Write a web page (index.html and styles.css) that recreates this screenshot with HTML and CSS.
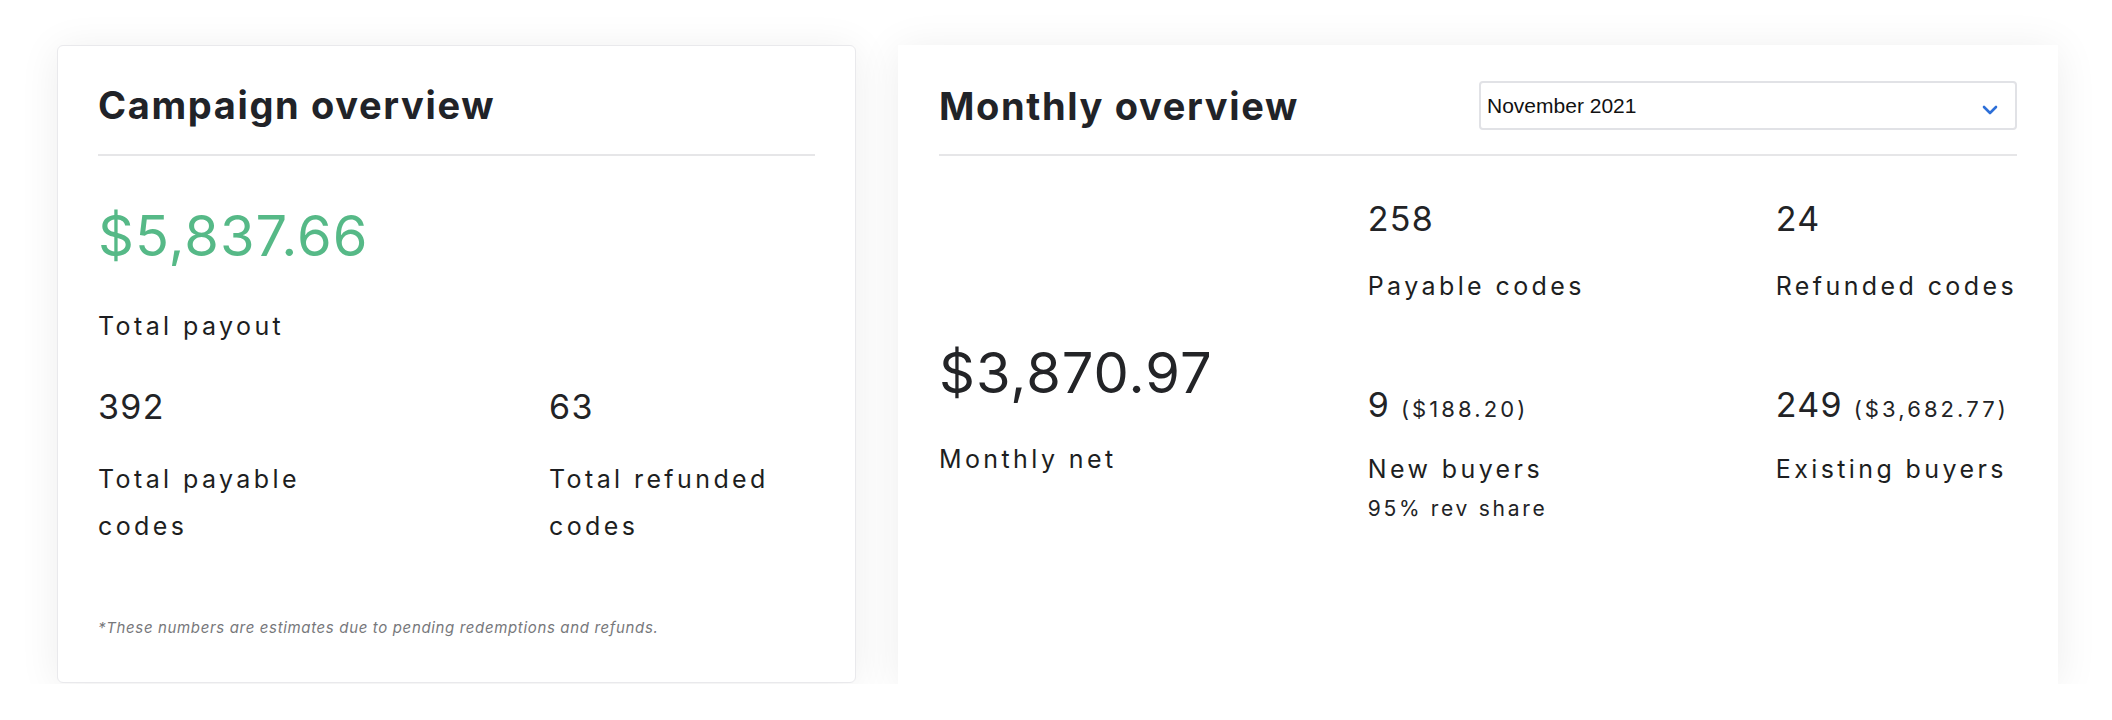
FILE: index.html
```html
<!DOCTYPE html>
<html lang="en">
<head>
<meta charset="utf-8">
<title>Overview</title>
<link rel="stylesheet" href="styles.css">
</head>
<body>
<div class="page">
  <section class="card card-campaign">
    <h2 class="card-title">Campaign overview</h2>
    <div class="divider"></div>
    <div class="amount amount-green">$5,837.66</div>
    <div class="label label-payout">Total payout</div>
    <div class="pair">
      <div class="stat">
        <div class="num">392</div>
        <div class="label label-wrap">Total payable codes</div>
      </div>
      <div class="stat">
        <div class="num">63</div>
        <div class="label label-wrap">Total refunded codes</div>
      </div>
    </div>
    <p class="footnote">*These numbers are estimates due to pending redemptions and refunds.</p>
  </section>

  <section class="card card-monthly">
    <div class="monthly-head">
      <h2 class="card-title">Monthly overview</h2>
      <div class="select">
        <span class="select-text">November 2021</span>
        <svg class="chev" width="16" height="10" viewBox="0 0 16 10"><path d="M2 2 L8 8 L14 2" fill="none" stroke="#2d6fd8" stroke-width="2.6" stroke-linecap="round" stroke-linejoin="round"/></svg>
      </div>
    </div>
    <div class="divider"></div>
    <div class="monthly-body">
      <div class="net">
        <div class="amount">$3,870.97</div>
        <div class="label label-net">Monthly net</div>
      </div>
      <div class="mgrid">
        <div class="mstat">
          <div class="num">258</div>
          <div class="label label-m">Payable codes</div>
        </div>
        <div class="mstat">
          <div class="num">24</div>
          <div class="label label-m">Refunded codes</div>
        </div>
        <div class="mstat row2">
          <div class="num">9 <span class="sub">($188.20)</span></div>
          <div class="label label-m">New buyers</div>
          <div class="small">95% rev share</div>
        </div>
        <div class="mstat row2">
          <div class="num">249 <span class="sub">($3,682.77)</span></div>
          <div class="label label-m">Existing buyers</div>
        </div>
      </div>
    </div>
  </section>
</div>
</body>
</html>
```

FILE: styles.css
```css
* { box-sizing: border-box; }
html, body { margin: 0; padding: 0; background: #ffffff; }
body {
  font-family: Inter, Lato, "Noto Sans", Arial, sans-serif;
  color: #222326;
}
.page {
  display: flex;
  align-items: stretch;
  gap: 42px;
  padding: 45px 54px 0 57px;
}
.card {
  background: #fff;
  box-shadow: 0 4px 40px rgba(0, 0, 0, 0.075);
  padding: 36px 41px 0 41px;
}
.card-campaign {
  width: 799px;
  height: 638px;
  border: 1px solid #e9e9ec;
  border-radius: 6px;
  padding: 35px 40px 0 40px;
}
.card-monthly {
  width: 1160px;
  height: 639px;
}
.card-title {
  margin: 0;
  font-size: 38px;
  line-height: 48px;
  font-weight: 700;
  color: #212328;
  letter-spacing: 1.65px;
}
.card-campaign .card-title { margin-bottom: 25px; }
.divider {
  height: 2px;
  background: #e6e6e8;
}
.amount {
  font-size: 56px;
  line-height: 68px;
  font-weight: 400;
  letter-spacing: 1px;
  color: #232427;
}
.amount-green {
  color: #56b987;
  margin-top: 46px;
}
.label {
  font-size: 25px;
  line-height: 36px;
  letter-spacing: 3.4px;
  color: #1d1e21;
}
.label-payout { margin-top: 38px; }
.pair {
  display: grid;
  grid-template-columns: 451px 1fr;
  margin-top: 42px;
}
.num {
  font-size: 34px;
  line-height: 42px;
  font-weight: 400;
  letter-spacing: 1.3px;
  color: #222326;
  white-space: nowrap;
}
.label-wrap {
  margin-top: 28px;
  line-height: 47px;
  max-width: 262px;
}
.footnote {
  margin: 68px 0 0 0;
  font-size: 15px;
  line-height: 20px;
  font-style: italic;
  color: #77787b;
  letter-spacing: 0.65px;
}
.monthly-head {
  display: flex;
  align-items: center;
  justify-content: space-between;
  height: 49px;
  margin-bottom: 24px;
}
.select {
  width: 538px;
  height: 49px;
  border: 2px solid #e1e2e6;
  border-radius: 4px;
  display: flex;
  align-items: center;
  justify-content: space-between;
  padding: 0 17px 0 6px;
  font-family: "Liberation Sans", Arial, sans-serif;
  font-size: 21px;
  color: #111;
}
.select-text { margin-top: 1px; }
.chev { display: block; margin-top: 9px; }
.monthly-body {
  display: flex;
}
.net {
  width: 430px;
  padding-top: 183px;
}
.label-net { margin-top: 34px; }
.mgrid {
  flex: 1;
  display: grid;
  grid-template-columns: 408px 1fr;
  align-content: start;
}
.mstat { padding-top: 42px; }
.mstat.row2 { padding-top: 80px; }
.label-m { margin-top: 28px; white-space: nowrap; }
.mstat.row2 .label-m { margin-top: 21px; }
.sub {
  font-size: 22px;
  letter-spacing: 3.1px;
}
.small {
  font-size: 21px;
  line-height: 28px;
  letter-spacing: 2.7px;
  margin-top: 8px;
  color: #222326;
}
```
